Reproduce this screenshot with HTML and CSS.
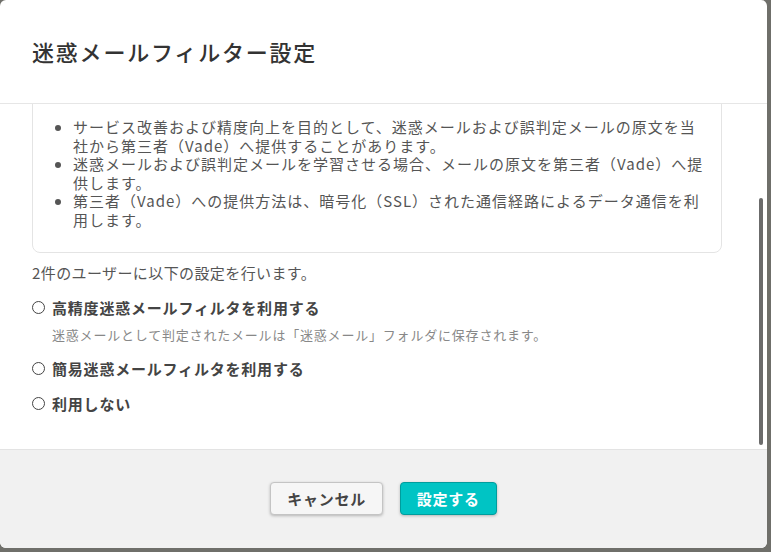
FILE: index.html
```html
<!DOCTYPE html>
<html lang="ja">
<head>
<meta charset="utf-8">
<title>迷惑メールフィルター設定</title>
<link rel="stylesheet" href="styles.css">
</head>
<body>
<div class="overlay">
  <div class="modal" role="dialog" aria-labelledby="modal-title">
    <header class="modal-header">
      <h2 class="modal-title" id="modal-title">迷惑メールフィルター設定</h2>
    </header>
    <div class="modal-body" id="modal-body">
      <div class="notice">
        <ul class="notice-list">
          <li>サービス改善および精度向上を目的として、迷惑メールおよび誤判定メールの原文を当社から第三者（Vade）へ提供することがあります。</li>
          <li>迷惑メールおよび誤判定メールを学習させる場合、メールの原文を第三者（Vade）へ提供します。</li>
          <li>第三者（Vade）への提供方法は、暗号化（SSL）された通信経路によるデータ通信を利用します。</li>
        </ul>
      </div>
      <p class="summary">2件のユーザーに以下の設定を行います。</p>
      <div class="options">
        <div class="option">
          <label class="option-row"><input class="radio" type="radio" name="filter" value="advanced"><span class="option-label">高精度迷惑メールフィルタを利用する</span></label>
          <p class="option-desc">迷惑メールとして判定されたメールは「迷惑メール」フォルダに保存されます。</p>
        </div>
        <div class="option">
          <label class="option-row"><input class="radio" type="radio" name="filter" value="simple"><span class="option-label">簡易迷惑メールフィルタを利用する</span></label>
        </div>
        <div class="option">
          <label class="option-row"><input class="radio" type="radio" name="filter" value="none"><span class="option-label">利用しない</span></label>
        </div>
      </div>
    </div>
    <div class="scroll-thumb" aria-hidden="true"></div>
    <footer class="modal-footer">
      <button class="btn btn-secondary" type="button">キャンセル</button>
      <button class="btn btn-primary" type="button">設定する</button>
    </footer>
  </div>
</div>
<script src="app.js"></script>
</body>
</html>
```

FILE: styles.css
```css
* { box-sizing: border-box; }

html, body {
  margin: 0;
  padding: 0;
  height: 100%;
}

body {
  background: #6f6f6a;
  font-family: "Noto Sans CJK JP", "Noto Sans", sans-serif;
  color: #555;
  overflow: hidden;
}

.overlay {
  width: 771px;
  height: 552px;
}

.modal {
  position: relative;
  width: 767px;
  height: 548px;
  background: #fff;
  border-radius: 6px;
  overflow: hidden;
  display: flex;
  flex-direction: column;
}

.modal-header {
  height: 104px;
  flex: none;
  display: flex;
  align-items: center;
  padding: 0 32px 1px;
  border-bottom: 1px solid #e6e6e6;
}

.modal-title {
  margin: 0;
  font-size: 22px;
  font-weight: 500;
  letter-spacing: 1.8px;
  color: #333;
}

.modal-body {
  flex: 1;
  overflow-y: auto;
  scrollbar-width: none;
  padding: 24px 45px 36px 32px;
}

.scroll-thumb {
  position: absolute;
  right: 4px;
  top: 198px;
  width: 4px;
  height: 247px;
  border-radius: 2px;
  background: #6b6b6b;
}

.notice {
  border: 1px solid #e4e4e4;
  border-radius: 8px;
  padding: 115px 16px 22px;
  font-size: 15px;
  letter-spacing: 1px;
}

.notice-list {
  margin: 0;
  padding-left: 24px;
  line-height: 18.6px;
}

.summary {
  margin: 10px 0 0;
  font-size: 15px;
  letter-spacing: 0.4px;
  line-height: 19px;
}

.options {
  margin-top: 16px;
  display: flex;
  flex-direction: column;
  gap: 16px;
}

.option-row {
  display: flex;
  align-items: center;
  gap: 7px;
  line-height: 19px;
  cursor: pointer;
}

.radio {
  appearance: none;
  -webkit-appearance: none;
  margin: 0;
  width: 13px;
  height: 13px;
  border: 1.3px solid #444;
  border-radius: 50%;
  background: #fff;
  flex: none;
}

.option-label {
  font-size: 15px;
  font-weight: 700;
  letter-spacing: 0.8px;
  color: #444;
}

.option-desc {
  margin: 10px 0 0 20px;
  font-size: 13px;
  letter-spacing: 0.8px;
  line-height: 16px;
  color: #888;
}

.modal-footer {
  flex: none;
  height: 99px;
  border-top: 1px solid #e3e3e3;
  background: #f1f1f1;
  display: flex;
  align-items: center;
  justify-content: center;
  gap: 17px;
  padding-bottom: 1px;
}

.btn {
  height: 33px;
  padding: 0 16px;
  border-radius: 4px;
  font-family: inherit;
  font-size: 15px;
  font-weight: 700;
  letter-spacing: 0.7px;
  cursor: pointer;
}

.btn-secondary {
  background: #f6f6f6;
  border: 1px solid #c4c4c4;
  color: #444;
  box-shadow: 0 1px 3px rgba(0, 0, 0, 0.25);
}

.btn-primary {
  background: #00c4c4;
  border: 1px solid #009d9d;
  color: #fff;
  box-shadow: 0 1px 3px rgba(0, 0, 0, 0.25);
}
```

FILE: app.js
```js
var modalBody = document.getElementById('modal-body');
modalBody.scrollTop = modalBody.scrollHeight;
window.addEventListener('load', function () {
  modalBody.scrollTop = modalBody.scrollHeight;
});
```
